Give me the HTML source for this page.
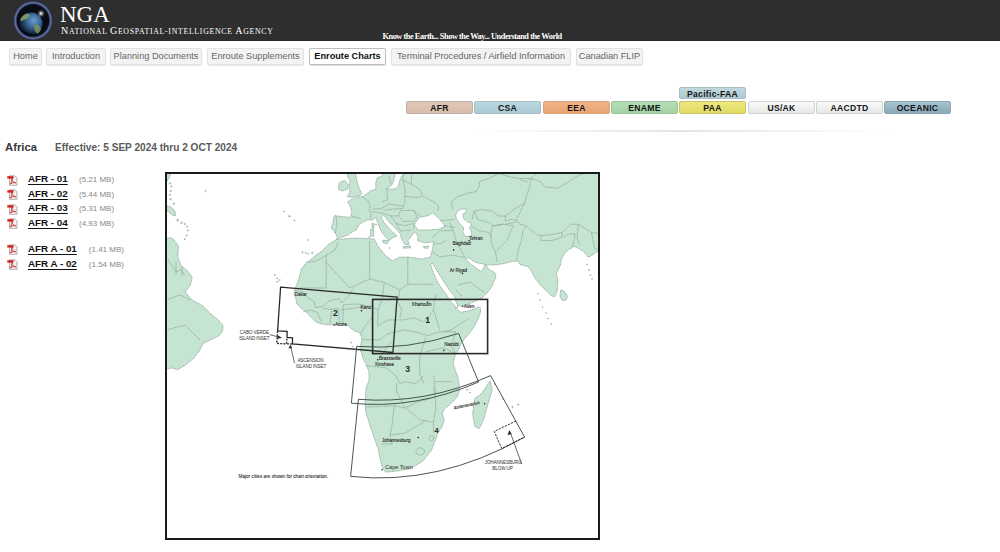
<!DOCTYPE html>
<html><head><meta charset="utf-8">
<style>
*{margin:0;padding:0;box-sizing:border-box}
html,body{width:1000px;height:552px;overflow:hidden;background:#fff;font-family:"Liberation Sans",sans-serif}
.abs{position:absolute}
#hdr{position:absolute;left:0;top:0;width:1000px;height:41px;background:#2e2e2e;border-bottom:1px solid #262626}
#logo{position:absolute;left:13px;top:1px;width:40px;height:40px;border-radius:50%;
 background:radial-gradient(circle at 50% 50%,#0a0e18 0,#0a0e18 60%,#3a4a78 66%,#6c7cb0 72%,#2a3458 80%,#1c2238 100%)}
.nga{position:absolute;left:60px;top:2.8px;font-family:"Liberation Serif",serif;color:#fff;font-size:23px;line-height:24px;letter-spacing:0px}
.agency{position:absolute;left:61px;top:24.7px;font-family:"Liberation Serif",serif;color:#fff;font-size:7.8px;line-height:12px;letter-spacing:0.7px;white-space:nowrap}.bc{font-size:10px}
.tag{position:absolute;left:382.5px;top:32px;font-family:"Liberation Serif",serif;color:#fff;font-size:8.3px;line-height:9px;font-weight:bold;letter-spacing:-0.45px}
.nav{position:absolute;top:48px;height:17px;background:#f3f3f3;border:1px solid #e2e2e2;border-radius:2px;box-shadow:0 1px 1px #e8e8e8;color:#666;font-size:9.2px;line-height:15px;text-align:center;white-space:nowrap}
.nav.on{background:#fff;border:1px solid #bdbdbd;color:#111;font-weight:bold;box-shadow:0 1px 1px #ddd}
.tab{position:absolute;top:101px;width:67px;height:13px;border:1px solid #b9b0aa;border-radius:2px;font-weight:bold;font-size:8.6px;line-height:12px;text-align:center;color:#151515;letter-spacing:0.3px}
.h{position:absolute;font-weight:bold;white-space:nowrap}
.row{position:absolute;left:7px;height:14px;white-space:nowrap}
.pdf{position:absolute;left:0;top:1.5px;width:11px;height:11px}
.fn{position:absolute;left:21px;top:0;font-weight:bold;font-size:9.8px;line-height:11px;color:#111;text-decoration:underline;text-decoration-thickness:1px;text-underline-offset:1.5px}
.sz{position:absolute;top:1px;font-size:8px;line-height:11px;color:#888}
</style></head><body>
<div id="hdr"></div>
<svg class="abs" style="left:8px;top:0" width="50" height="42" viewBox="0 0 50 42">
<defs>
<radialGradient id="lg1" cx="0.5" cy="0.5" r="0.5"><stop offset="0" stop-color="#05070c"/><stop offset="0.8" stop-color="#0a0d16"/><stop offset="0.85" stop-color="#34406a"/><stop offset="0.91" stop-color="#6a78a8"/><stop offset="0.96" stop-color="#3c4870"/><stop offset="1" stop-color="#2a3040"/></radialGradient>
<radialGradient id="earth" cx="0.62" cy="0.35" r="0.7"><stop offset="0" stop-color="#6f9cc8"/><stop offset="0.4" stop-color="#3a6c9c"/><stop offset="0.75" stop-color="#1a3050"/><stop offset="1" stop-color="#060a14"/></radialGradient>
<radialGradient id="sun" cx="0.5" cy="0.5" r="0.5"><stop offset="0" stop-color="#ffffff"/><stop offset="0.25" stop-color="#d0d0d8" stop-opacity="0.85"/><stop offset="1" stop-color="#222" stop-opacity="0"/></radialGradient>
<clipPath id="inner"><circle cx="25" cy="20.5" r="16.3"/></clipPath>
<clipPath id="gl"><circle cx="23" cy="24" r="11.5"/></clipPath>
</defs>
<rect x="0" y="0" width="50" height="40" fill="#2e2e2e"/>
<circle cx="25" cy="20.5" r="19.6" fill="url(#lg1)"/>
<g clip-path="url(#inner)">
<circle cx="23" cy="24" r="11.5" fill="url(#earth)"/>
<g clip-path="url(#gl)">
<path d="M11,15 C15,12.5 20,13 22,15.5 C21,18.5 17,19 14,21 L11,20 Z" fill="#8a9a60" opacity="0.9"/>
<path d="M26,25 C29,23 33,26 33,31 C31,35 28,34 26.5,30 Z" fill="#7e9058" opacity="0.85"/>
<path d="M8,22 C12,31 22,37 35,33 L35,42 L5,42 Z" fill="#04060c" opacity="0.8"/>
</g>
<circle cx="33" cy="13.5" r="4.5" fill="url(#sun)"/>
</g>
</svg>
<div class="nga">NGA</div>
<div class="agency"><span class="bc">N</span>ATIONAL <span class="bc">G</span>EOSPATIAL-INTELLIGENCE <span class="bc">A</span>GENCY</div>
<div class="tag">Know the Earth... Show the Way... Understand the World</div>

<div class="nav" style="left:9px;width:33px">Home</div>
<div class="nav" style="left:46px;width:60px">Introduction</div>
<div class="nav" style="left:110px;width:92px">Planning Documents</div>
<div class="nav" style="left:207px;width:97px">Enroute Supplements</div>
<div class="nav on" style="left:309px;width:77px">Enroute Charts</div>
<div class="nav" style="left:391px;width:180px">Terminal Procedures / Airfield Information</div>
<div class="nav" style="left:576px;width:67px">Canadian FLIP</div>

<div class="tab" style="left:679px;top:87px;height:12px;background:linear-gradient(#c2d8de,#adc9d2);border-color:#a9bcc2">Pacific-FAA</div>
<div class="tab" style="left:406px;background:linear-gradient(#e2c8ba,#d9bca9)">AFR</div>
<div class="tab" style="left:474px;background:linear-gradient(#bcd8e0,#a9cad6);border-color:#a8bcc4">CSA</div>
<div class="tab" style="left:543px;background:linear-gradient(#f0b488,#e8a474);border-color:#d9a07c">EEA</div>
<div class="tab" style="left:611px;background:linear-gradient(#b6deb6,#a2d2a2);border-color:#9cc09c">ENAME</div>
<div class="tab" style="left:679px;background:linear-gradient(#ece882,#e0dc62);border-color:#c8c468">PAA</div>
<div class="tab" style="left:748px;background:linear-gradient(#fafafa,#e6e6e6);border-color:#d0d0d0">US/AK</div>
<div class="tab" style="left:816px;background:linear-gradient(#fafafa,#e6e6e6);border-color:#d0d0d0">AACDTD</div>
<div class="tab" style="left:884px;background:linear-gradient(#a8c4d0,#86a8b8);border-color:#8aa4b0">OCEANIC</div>
<div class="abs" style="left:470px;top:130px;width:420px;height:2px;background:linear-gradient(90deg,rgba(230,230,230,0),#e4e4e4 50%,rgba(230,230,230,0))"></div>

<div class="h" style="left:5px;top:141px;font-size:11.3px;line-height:13px;color:#3a3a3a">Africa</div>
<div class="h" style="left:55px;top:142px;font-size:10.1px;line-height:12px;color:#5a5a5a">Effective: 5 SEP 2024 thru 2 OCT 2024</div>

<div class="row" style="top:173.0px"><svg class="pdf" viewBox="0 0 11 11"><path d="M2.5,0.8 L8,0.8 L10,2.8 L10,10.3 L2.5,10.3 Z" fill="#f4f0f0" stroke="#9a8e8e" stroke-width="0.7"/><path d="M0.3,1.2 L6.5,1.2 L6.5,3.6 L0.3,3.6 Z" fill="#d32020"/><path d="M3.5,9 C4.5,6.5 5.5,4 5.2,3 C4.8,2.5 4.4,3.5 5,5 C5.6,6.5 7,7.8 8.8,8 C8.5,7 6,7.2 3.5,9 Z" fill="none" stroke="#c81e1e" stroke-width="0.8"/></svg><span class="fn">AFR - 01</span><span class="sz" style="left:72px">(5.21 MB)</span></div>
<div class="row" style="top:187.8px"><svg class="pdf" viewBox="0 0 11 11"><path d="M2.5,0.8 L8,0.8 L10,2.8 L10,10.3 L2.5,10.3 Z" fill="#f4f0f0" stroke="#9a8e8e" stroke-width="0.7"/><path d="M0.3,1.2 L6.5,1.2 L6.5,3.6 L0.3,3.6 Z" fill="#d32020"/><path d="M3.5,9 C4.5,6.5 5.5,4 5.2,3 C4.8,2.5 4.4,3.5 5,5 C5.6,6.5 7,7.8 8.8,8 C8.5,7 6,7.2 3.5,9 Z" fill="none" stroke="#c81e1e" stroke-width="0.8"/></svg><span class="fn">AFR - 02</span><span class="sz" style="left:72px">(5.44 MB)</span></div>
<div class="row" style="top:202.3px"><svg class="pdf" viewBox="0 0 11 11"><path d="M2.5,0.8 L8,0.8 L10,2.8 L10,10.3 L2.5,10.3 Z" fill="#f4f0f0" stroke="#9a8e8e" stroke-width="0.7"/><path d="M0.3,1.2 L6.5,1.2 L6.5,3.6 L0.3,3.6 Z" fill="#d32020"/><path d="M3.5,9 C4.5,6.5 5.5,4 5.2,3 C4.8,2.5 4.4,3.5 5,5 C5.6,6.5 7,7.8 8.8,8 C8.5,7 6,7.2 3.5,9 Z" fill="none" stroke="#c81e1e" stroke-width="0.8"/></svg><span class="fn">AFR - 03</span><span class="sz" style="left:72px">(5.31 MB)</span></div>
<div class="row" style="top:216.8px"><svg class="pdf" viewBox="0 0 11 11"><path d="M2.5,0.8 L8,0.8 L10,2.8 L10,10.3 L2.5,10.3 Z" fill="#f4f0f0" stroke="#9a8e8e" stroke-width="0.7"/><path d="M0.3,1.2 L6.5,1.2 L6.5,3.6 L0.3,3.6 Z" fill="#d32020"/><path d="M3.5,9 C4.5,6.5 5.5,4 5.2,3 C4.8,2.5 4.4,3.5 5,5 C5.6,6.5 7,7.8 8.8,8 C8.5,7 6,7.2 3.5,9 Z" fill="none" stroke="#c81e1e" stroke-width="0.8"/></svg><span class="fn">AFR - 04</span><span class="sz" style="left:72px">(4.93 MB)</span></div>
<div class="row" style="top:242.7px"><svg class="pdf" viewBox="0 0 11 11"><path d="M2.5,0.8 L8,0.8 L10,2.8 L10,10.3 L2.5,10.3 Z" fill="#f4f0f0" stroke="#9a8e8e" stroke-width="0.7"/><path d="M0.3,1.2 L6.5,1.2 L6.5,3.6 L0.3,3.6 Z" fill="#d32020"/><path d="M3.5,9 C4.5,6.5 5.5,4 5.2,3 C4.8,2.5 4.4,3.5 5,5 C5.6,6.5 7,7.8 8.8,8 C8.5,7 6,7.2 3.5,9 Z" fill="none" stroke="#c81e1e" stroke-width="0.8"/></svg><span class="fn">AFR A - 01</span><span class="sz" style="left:81.8px">(1.41 MB)</span></div>
<div class="row" style="top:257.8px"><svg class="pdf" viewBox="0 0 11 11"><path d="M2.5,0.8 L8,0.8 L10,2.8 L10,10.3 L2.5,10.3 Z" fill="#f4f0f0" stroke="#9a8e8e" stroke-width="0.7"/><path d="M0.3,1.2 L6.5,1.2 L6.5,3.6 L0.3,3.6 Z" fill="#d32020"/><path d="M3.5,9 C4.5,6.5 5.5,4 5.2,3 C4.8,2.5 4.4,3.5 5,5 C5.6,6.5 7,7.8 8.8,8 C8.5,7 6,7.2 3.5,9 Z" fill="none" stroke="#c81e1e" stroke-width="0.8"/></svg><span class="fn">AFR A - 02</span><span class="sz" style="left:81.8px">(1.54 MB)</span></div>


<svg class="abs" style="left:0;top:0" width="1000" height="552" viewBox="0 0 1000 552">
<defs><clipPath id="mc"><rect x="166" y="173" width="433" height="366"/></clipPath></defs>
<g clip-path="url(#mc)">
<path d="M383.0,173.0 L600.0,173.0 L600.0,252.0 L597.0,251.7 L592.6,255.0 L588.3,257.2 L583.9,251.7 L578.5,248.5 L574.1,246.3 L568.7,249.6 L564.3,253.9 L561.5,259.0 L560.5,265.0 L556.2,273.6 L558.0,280.8 L557.1,291.7 L554.3,297.1 L550.7,295.3 L545.3,289.9 L539.9,284.4 L534.4,277.2 L530.8,269.9 L527.2,266.3 L519.9,264.5 L518.0,261.0 L510.9,261.7 L502.2,263.9 L493.5,265.0 L486.0,264.5 L488.4,269.0 L494.8,272.8 L496.0,277.0 L494.4,280.0 L492.0,286.4 L488.0,292.0 L482.4,297.6 L476.0,300.8 L468.0,304.0 L462.4,306.4 L457.6,305.6 L455.5,309.0 L461.2,312.2 L467.7,311.0 L474.2,309.0 L478.3,306.9 L480.3,307.7 L480.7,311.4 L479.1,316.3 L476.7,322.0 L473.4,327.7 L469.3,333.4 L464.4,339.1 L461.2,343.2 L459.1,348.8 L454.8,356.1 L453.3,363.3 L454.8,369.1 L457.7,376.4 L459.0,383.6 L459.5,390.9 L457.0,397.0 L450.9,403.5 L444.3,409.1 L442.2,413.5 L444.3,420.0 L442.2,426.5 L437.8,433.0 L435.7,439.6 L431.3,450.4 L422.6,461.3 L409.6,468.9 L396.5,471.1 L385.7,472.2 L382.4,467.8 L380.2,459.1 L378.0,448.3 L374.8,439.6 L370.4,426.5 L366.1,413.5 L365.0,402.6 L366.1,387.4 L369.0,380.7 L369.0,371.7 L365.4,362.6 L363.5,360.0 L361.7,353.5 L359.9,348.1 L360.8,344.5 L361.7,339.9 L361.3,335.4 L359.0,332.7 L354.5,330.9 L350.8,328.1 L347.2,325.0 L338.1,324.1 L329.1,325.0 L320.0,323.6 L315.7,321.8 L310.3,316.3 L304.9,310.9 L300.3,307.3 L296.7,303.7 L295.8,298.2 L294.0,294.6 L294.9,289.2 L298.5,280.1 L301.2,269.2 L306.7,262.0 L309.4,260.8 L315.7,255.3 L321.2,251.7 L328.4,244.5 L336.6,239.5 L337.5,238.0 L334.7,231.8 L331.1,228.2 L333.0,222.7 L333.8,217.3 L334.7,215.5 L341.0,216.5 L350.0,217.3 L352.0,211.9 L350.0,205.5 L347.4,201.9 L352.0,199.2 L361.0,196.5 L361.9,197.3 L366.3,194.0 L370.7,190.7 L376.0,189.4 L375.7,183.0 L377.3,177.5 L381.7,176.4 L383.0,173.0Z" fill="#c6e4d2" stroke="#7f978a" stroke-width="0.7" stroke-dasharray="1.3 0.5"/>
<path d="M166.0,238.0 L172.2,238.0 L178.6,246.0 L177.7,257.0 L181.3,266.0 L186.7,270.0 L192.2,277.0 L190.4,285.0 L185.0,292.0 L192.2,300.0 L203.0,306.0 L212.0,315.0 L218.4,320.0 L223.0,325.4 L222.6,330.9 L219.3,335.4 L212.1,339.0 L203.0,343.5 L199.4,350.8 L194.0,358.0 L185.0,365.3 L177.7,369.8 L172.2,368.0 L166.0,369.0Z" fill="#c6e4d2" stroke="#7f978a" stroke-width="0.7" stroke-dasharray="1.3 0.5"/>
<path d="M490.0,380.9 L492.2,389.6 L487.8,404.8 L483.5,420.0 L479.1,428.7 L474.8,426.5 L472.6,413.5 L474.8,398.3 L481.3,393.9 L485.7,387.4Z" fill="#c6e4d2" stroke="#7f978a" stroke-width="0.7" stroke-dasharray="1.3 0.5"/>
<path d="M560.5,290.0 L564.0,291.0 L567.5,296.0 L566.0,300.0 L562.0,300.5 L560.0,296.0Z" fill="#c6e4d2" stroke="#7f978a" stroke-width="0.7" stroke-dasharray="1.3 0.5"/>
<path d="M167.0,206.0 L171.0,207.0 L175.0,211.0 L175.5,216.0 L172.0,215.0 L168.5,212.0 L166.0,210.0Z" fill="#c6e4d2" stroke="#7f978a" stroke-width="0.7" stroke-dasharray="1.3 0.5"/>
<path d="M166.0,173.0 L171.0,173.0 L169.0,178.0 L166.0,183.0Z" fill="#c6e4d2" stroke="#7f978a" stroke-width="0.7" stroke-dasharray="1.3 0.5"/>
<path d="M336.6,239.5 L338.1,238.1 L347.2,235.4 L352.0,232.0 L356.2,230.0 L359.0,224.5 L363.5,221.8 L367.1,220.0 L372.5,220.0 L376.2,217.3 L377.5,222.0 L379.5,227.5 L382.0,232.5 L386.0,237.5 L389.5,240.5 L391.5,238.5 L394.5,237.0 L397.0,236.0 L393.2,232.5 L388.8,228.2 L384.5,223.1 L380.9,217.3 L383.8,215.1 L388.8,221.7 L393.2,226.0 L397.5,230.4 L400.4,234.0 L401.5,239.0 L405.1,244.5 L408.8,244.5 L408.0,240.0 L410.6,237.2 L414.2,231.8 L417.8,235.4 L417.8,240.8 L425.0,242.7 L434.1,241.7 L432.3,249.9 L430.5,257.1 L421.4,259.0 L408.8,257.1 L399.7,257.1 L392.5,260.8 L385.2,255.3 L378.0,246.3 L374.3,239.0 L356.2,238.1 L341.7,239.0Z" fill="#ffffff" stroke="#7f978a" stroke-width="0.7" stroke-dasharray="1.3 0.5"/>
<path d="M414.2,224.5 L419.6,217.3 L428.7,215.5 L432.3,212.8 L435.9,215.5 L441.4,220.9 L445.0,226.3 L439.6,229.1 L428.7,230.0 L417.8,230.0Z" fill="#ffffff" stroke="#7f978a" stroke-width="0.7" stroke-dasharray="1.3 0.5"/>
<path d="M457.2,211.4 L461.3,209.0 L466.2,209.0 L466.2,212.2 L462.9,213.9 L463.7,218.7 L467.8,222.0 L471.1,222.8 L471.1,225.3 L469.4,227.7 L471.1,231.0 L471.9,235.0 L469.4,236.7 L464.6,235.9 L462.9,231.8 L463.7,227.7 L459.7,223.6 L456.4,218.7 L455.6,215.5Z" fill="#ffffff" stroke="#7f978a" stroke-width="0.7" stroke-dasharray="1.3 0.5"/>
<path d="M430.5,264.0 L433.0,272.0 L436.5,280.0 L441.0,287.5 L446.0,294.0 L450.0,300.5 L455.0,306.0 L457.6,308.8 L457.6,305.6 L455.5,300.0 L454.4,296.0 L450.4,291.5 L445.6,284.5 L441.0,277.0 L436.5,270.0 L432.5,263.0Z" fill="#ffffff" stroke="#7f978a" stroke-width="0.7" stroke-dasharray="1.3 0.5"/>
<path d="M465.6,258.9 L468.2,257.6 L475.8,262.7 L483.4,264.0 L486.0,264.5 L484.6,265.2 L483.4,269.0 L480.8,271.5 L475.8,267.7 L470.7,264.0Z" fill="#ffffff" stroke="#7f978a" stroke-width="0.7" stroke-dasharray="1.3 0.5"/>
<path d="M387.2,188.5 L391.6,185.2 L393.8,180.8 L394.9,174.2 L395.0,173.0 L406.0,173.0 L402.0,176.0 L400.4,178.6 L398.2,186.3 L396.0,188.5 L391.0,189.5Z" fill="#ffffff" stroke="#7f978a" stroke-width="0.7" stroke-dasharray="1.3 0.5"/>
<path d="M347.4,173.0 L355.6,173.0 L356.5,180.0 L359.2,188.3 L362.0,193.7 L360.0,195.5 L352.0,197.4 L347.4,196.5 L350.0,192.0 L349.0,186.5 L350.0,181.0 L347.4,176.0Z" fill="#c6e4d2" stroke="#7f978a" stroke-width="0.7" stroke-dasharray="1.3 0.5"/>
<path d="M339.3,182.9 L344.7,180.2 L348.3,184.7 L347.4,189.2 L342.0,191.0 L338.4,189.2Z" fill="#c6e4d2" stroke="#7f978a" stroke-width="0.7" stroke-dasharray="1.3 0.5"/>
<path d="M382.5,240.5 L388.5,240.2 L387.5,243.5 L383.5,243.0Z" fill="#c6e4d2" stroke="#7f978a" stroke-width="0.7" stroke-dasharray="1.3 0.5"/>
<path d="M370.5,229.5 L373.5,229.0 L373.8,236.0 L370.5,236.5Z" fill="#c6e4d2" stroke="#7f978a" stroke-width="0.7" stroke-dasharray="1.3 0.5"/>
<path d="M372.0,223.5 L374.0,223.5 L373.8,228.0 L372.0,228.0Z" fill="#c6e4d2" stroke="#7f978a" stroke-width="0.7" stroke-dasharray="1.3 0.5"/>
<path d="M403.5,246.5 L410.7,246.0 L410.5,247.8 L403.5,248.3Z" fill="#c6e4d2" stroke="#7f978a" stroke-width="0.7" stroke-dasharray="1.3 0.5"/>
<path d="M423.4,246.5 L428.8,246.0 L427.5,248.3 L424.0,248.0Z" fill="#c6e4d2" stroke="#7f978a" stroke-width="0.7" stroke-dasharray="1.3 0.5"/>
<circle cx="170" cy="183.4" r="0.8" fill="#c6e4d2" stroke="#7d9488" stroke-width="0.5"/>
<circle cx="171.3" cy="186.5" r="0.7" fill="#c6e4d2" stroke="#7d9488" stroke-width="0.5"/>
<circle cx="170.7" cy="191" r="0.8" fill="#c6e4d2" stroke="#7d9488" stroke-width="0.5"/>
<circle cx="170" cy="194.8" r="0.7" fill="#c6e4d2" stroke="#7d9488" stroke-width="0.5"/>
<circle cx="170.7" cy="199.3" r="0.8" fill="#c6e4d2" stroke="#7d9488" stroke-width="0.5"/>
<circle cx="173.9" cy="203.7" r="0.8" fill="#c6e4d2" stroke="#7d9488" stroke-width="0.5"/>
<circle cx="177.7" cy="220.2" r="1" fill="#c6e4d2" stroke="#7d9488" stroke-width="0.5"/>
<circle cx="181.5" cy="222.8" r="0.9" fill="#c6e4d2" stroke="#7d9488" stroke-width="0.5"/>
<circle cx="184.7" cy="224" r="0.8" fill="#c6e4d2" stroke="#7d9488" stroke-width="0.5"/>
<circle cx="187.2" cy="226.6" r="0.7" fill="#c6e4d2" stroke="#7d9488" stroke-width="0.5"/>
<circle cx="187.8" cy="230.4" r="0.7" fill="#c6e4d2" stroke="#7d9488" stroke-width="0.5"/>
<circle cx="186.6" cy="235.5" r="0.7" fill="#c6e4d2" stroke="#7d9488" stroke-width="0.5"/>
<circle cx="184.7" cy="239.3" r="0.7" fill="#c6e4d2" stroke="#7d9488" stroke-width="0.5"/>
<circle cx="205.6" cy="191" r="0.6" fill="#c6e4d2" stroke="#7d9488" stroke-width="0.5"/>
<circle cx="283.8" cy="211.4" r="0.6" fill="#c6e4d2" stroke="#7d9488" stroke-width="0.5"/>
<circle cx="289.5" cy="216.3" r="0.9" fill="#c6e4d2" stroke="#7d9488" stroke-width="0.5"/>
<circle cx="294.4" cy="220.4" r="0.6" fill="#c6e4d2" stroke="#7d9488" stroke-width="0.5"/>
<circle cx="308.2" cy="240" r="0.6" fill="#c6e4d2" stroke="#7d9488" stroke-width="0.5"/>
<circle cx="302.5" cy="252.2" r="0.7" fill="#c6e4d2" stroke="#7d9488" stroke-width="0.5"/>
<circle cx="305.8" cy="253" r="0.6" fill="#c6e4d2" stroke="#7d9488" stroke-width="0.5"/>
<circle cx="308.2" cy="253.8" r="0.6" fill="#c6e4d2" stroke="#7d9488" stroke-width="0.5"/>
<circle cx="312.3" cy="253" r="0.8" fill="#c6e4d2" stroke="#7d9488" stroke-width="0.5"/>
<circle cx="274.8" cy="275" r="0.6" fill="#c6e4d2" stroke="#7d9488" stroke-width="0.5"/>
<circle cx="277.2" cy="278.3" r="0.6" fill="#c6e4d2" stroke="#7d9488" stroke-width="0.5"/>
<circle cx="279.7" cy="280" r="0.6" fill="#c6e4d2" stroke="#7d9488" stroke-width="0.5"/>
<circle cx="277.2" cy="281.6" r="0.6" fill="#c6e4d2" stroke="#7d9488" stroke-width="0.5"/>
<circle cx="351" cy="342.5" r="0.6" fill="#c6e4d2" stroke="#7d9488" stroke-width="0.5"/>
<circle cx="352.6" cy="346.5" r="0.5" fill="#c6e4d2" stroke="#7d9488" stroke-width="0.5"/>
<circle cx="538" cy="293.5" r="0.5" fill="#c6e4d2" stroke="#7d9488" stroke-width="0.5"/>
<circle cx="540" cy="300" r="0.5" fill="#c6e4d2" stroke="#7d9488" stroke-width="0.5"/>
<circle cx="542.5" cy="307" r="0.5" fill="#c6e4d2" stroke="#7d9488" stroke-width="0.5"/>
<circle cx="546" cy="313" r="0.5" fill="#c6e4d2" stroke="#7d9488" stroke-width="0.5"/>
<circle cx="548" cy="318.5" r="0.5" fill="#c6e4d2" stroke="#7d9488" stroke-width="0.5"/>
<circle cx="551" cy="324" r="0.5" fill="#c6e4d2" stroke="#7d9488" stroke-width="0.5"/>
<circle cx="587" cy="264.5" r="0.5" fill="#c6e4d2" stroke="#7d9488" stroke-width="0.5"/>
<circle cx="589" cy="270" r="0.6" fill="#c6e4d2" stroke="#7d9488" stroke-width="0.5"/>
<circle cx="590.5" cy="275" r="0.5" fill="#c6e4d2" stroke="#7d9488" stroke-width="0.5"/>
<circle cx="592" cy="279" r="0.5" fill="#c6e4d2" stroke="#7d9488" stroke-width="0.5"/>
<circle cx="467" cy="390" r="0.6" fill="#c6e4d2" stroke="#7d9488" stroke-width="0.5"/>
<circle cx="470" cy="392.5" r="0.5" fill="#c6e4d2" stroke="#7d9488" stroke-width="0.5"/>
<circle cx="512.5" cy="407" r="0.7" fill="#c6e4d2" stroke="#7d9488" stroke-width="0.5"/>
<circle cx="518" cy="404.5" r="0.7" fill="#c6e4d2" stroke="#7d9488" stroke-width="0.5"/>
<circle cx="503" cy="399" r="0.5" fill="#c6e4d2" stroke="#7d9488" stroke-width="0.5"/>
<circle cx="495" cy="384" r="0.5" fill="#c6e4d2" stroke="#7d9488" stroke-width="0.5"/>
<circle cx="376" cy="224.5" r="0.6" fill="#c6e4d2" stroke="#7d9488" stroke-width="0.5"/>
<circle cx="389.5" cy="248" r="0.5" fill="#c6e4d2" stroke="#7d9488" stroke-width="0.5"/>
<circle cx="369" cy="237" r="0.5" fill="#c6e4d2" stroke="#7d9488" stroke-width="0.5"/>
<path d="M338.0,242.7 L335.3,249.9 L326.2,255.4 L317.2,260.8 L308.0,262.6" fill="none" stroke="#82998c" stroke-width="0.65" stroke-dasharray="1.4 0.4"/>
<path d="M326.2,255.4 L326.2,288.0" fill="none" stroke="#82998c" stroke-width="0.65" stroke-dasharray="1.4 0.4"/>
<path d="M326.2,262.6 L349.8,288.0" fill="none" stroke="#82998c" stroke-width="0.65" stroke-dasharray="1.4 0.4"/>
<path d="M349.8,288.0 L369.7,278.9" fill="none" stroke="#82998c" stroke-width="0.65" stroke-dasharray="1.4 0.4"/>
<path d="M369.7,240.9 L369.7,278.9" fill="none" stroke="#82998c" stroke-width="0.65" stroke-dasharray="1.4 0.4"/>
<path d="M300.0,288.0 L326.2,288.0" fill="none" stroke="#82998c" stroke-width="0.65" stroke-dasharray="1.4 0.4"/>
<path d="M407.8,257.2 L407.8,284.3 L433.1,284.3" fill="none" stroke="#82998c" stroke-width="0.65" stroke-dasharray="1.4 0.4"/>
<path d="M369.7,278.9 L384.2,282.5 L399.8,290.0" fill="none" stroke="#82998c" stroke-width="0.65" stroke-dasharray="1.4 0.4"/>
<path d="M384.2,282.5 L382.4,298.8 L378.0,310.0" fill="none" stroke="#82998c" stroke-width="0.65" stroke-dasharray="1.4 0.4"/>
<path d="M407.8,284.3 L399.8,290.0 L397.8,302.0 L401.8,310.0 L399.8,317.9" fill="none" stroke="#82998c" stroke-width="0.65" stroke-dasharray="1.4 0.4"/>
<path d="M377.8,325.9 L387.8,319.9 L399.8,319.9 L403.7,319.9 L413.7,317.9 L423.7,321.9 L429.6,315.9 L433.6,309.9" fill="none" stroke="#82998c" stroke-width="0.65" stroke-dasharray="1.4 0.4"/>
<path d="M435.6,294.0 L433.6,310.0 L439.6,329.8" fill="none" stroke="#82998c" stroke-width="0.65" stroke-dasharray="1.4 0.4"/>
<path d="M443.6,331.8 L451.6,329.8 L469.5,317.9" fill="none" stroke="#82998c" stroke-width="0.65" stroke-dasharray="1.4 0.4"/>
<path d="M387.8,333.8 L403.7,329.8 L415.7,331.8 L427.6,335.8 L439.6,331.8 L455.5,331.8" fill="none" stroke="#82998c" stroke-width="0.65" stroke-dasharray="1.4 0.4"/>
<path d="M455.5,331.8 L451.6,345.8 L455.5,353.7" fill="none" stroke="#82998c" stroke-width="0.65" stroke-dasharray="1.4 0.4"/>
<path d="M425.7,337.8 L421.7,349.8 L419.7,355.7 L419.7,373.7 L423.7,383.6" fill="none" stroke="#82998c" stroke-width="0.65" stroke-dasharray="1.4 0.4"/>
<path d="M425.7,351.8 L443.6,347.8 L455.5,353.7" fill="none" stroke="#82998c" stroke-width="0.65" stroke-dasharray="1.4 0.4"/>
<path d="M379.8,357.7 L387.8,345.8 L393.8,339.8" fill="none" stroke="#82998c" stroke-width="0.65" stroke-dasharray="1.4 0.4"/>
<path d="M361.9,339.8 L379.8,339.8 L387.8,333.8" fill="none" stroke="#82998c" stroke-width="0.65" stroke-dasharray="1.4 0.4"/>
<path d="M371.9,317.9 L363.9,327.8 L359.9,335.8" fill="none" stroke="#82998c" stroke-width="0.65" stroke-dasharray="1.4 0.4"/>
<path d="M340.0,310.0 L355.9,307.9 L369.9,305.9 L378.0,310.0 L377.8,325.9" fill="none" stroke="#82998c" stroke-width="0.65" stroke-dasharray="1.4 0.4"/>
<path d="M365.9,365.7 L385.8,367.7 L395.8,375.7 L399.8,383.6 L405.7,381.6 L415.7,383.6 L423.7,375.7" fill="none" stroke="#82998c" stroke-width="0.65" stroke-dasharray="1.4 0.4"/>
<path d="M435.6,381.6 L451.6,381.6" fill="none" stroke="#82998c" stroke-width="0.65" stroke-dasharray="1.4 0.4"/>
<path d="M433.6,375.7 L435.6,393.6" fill="none" stroke="#82998c" stroke-width="0.65" stroke-dasharray="1.4 0.4"/>
<path d="M366.1,407.0 L394.3,405.9 L405.2,408.0" fill="none" stroke="#82998c" stroke-width="0.65" stroke-dasharray="1.4 0.4"/>
<path d="M394.3,405.9 L392.2,424.3 L390.0,435.2 L392.2,443.9 L381.3,443.9" fill="none" stroke="#82998c" stroke-width="0.65" stroke-dasharray="1.4 0.4"/>
<path d="M390.0,435.2 L405.2,433.0 L416.1,426.5 L427.0,420.0" fill="none" stroke="#82998c" stroke-width="0.65" stroke-dasharray="1.4 0.4"/>
<path d="M405.2,408.0 L420.4,420.0 L433.5,422.2 L435.7,409.1" fill="none" stroke="#82998c" stroke-width="0.65" stroke-dasharray="1.4 0.4"/>
<path d="M405.2,408.0 L416.1,402.6 L431.3,398.3" fill="none" stroke="#82998c" stroke-width="0.65" stroke-dasharray="1.4 0.4"/>
<path d="M433.5,387.4 L435.7,400.4 L435.7,409.1" fill="none" stroke="#82998c" stroke-width="0.65" stroke-dasharray="1.4 0.4"/>
<path d="M396.5,383.0 L396.5,391.7 L405.2,408.0" fill="none" stroke="#82998c" stroke-width="0.65" stroke-dasharray="1.4 0.4"/>
<path d="M433.5,422.2 L433.5,433.0" fill="none" stroke="#82998c" stroke-width="0.65" stroke-dasharray="1.4 0.4"/>
<path d="M294.0,290.4 L303.0,292.2 L307.5,297.6 L313.8,301.2 L315.6,307.5" fill="none" stroke="#82998c" stroke-width="0.65" stroke-dasharray="1.4 0.4"/>
<path d="M303.0,312.0 L310.2,310.2 L317.4,312.0 L321.0,321.0" fill="none" stroke="#82998c" stroke-width="0.65" stroke-dasharray="1.4 0.4"/>
<path d="M315.6,307.5 L322.8,306.6 L328.2,301.2 L339.0,298.5 L341.7,303.0" fill="none" stroke="#82998c" stroke-width="0.65" stroke-dasharray="1.4 0.4"/>
<path d="M322.8,308.4 L330.0,309.3 L339.0,308.4" fill="none" stroke="#82998c" stroke-width="0.65" stroke-dasharray="1.4 0.4"/>
<path d="M338.1,308.4 L339.9,323.7" fill="none" stroke="#82998c" stroke-width="0.65" stroke-dasharray="1.4 0.4"/>
<path d="M331.8,309.3 L330.0,323.7" fill="none" stroke="#82998c" stroke-width="0.65" stroke-dasharray="1.4 0.4"/>
<path d="M341.7,303.0 L348.0,296.7 L353.4,288.6" fill="none" stroke="#82998c" stroke-width="0.65" stroke-dasharray="1.4 0.4"/>
<path d="M343.5,304.8 L357.0,303.9 L366.0,305.7" fill="none" stroke="#82998c" stroke-width="0.65" stroke-dasharray="1.4 0.4"/>
<path d="M343.5,304.8 L342.6,324.6" fill="none" stroke="#82998c" stroke-width="0.65" stroke-dasharray="1.4 0.4"/>
<path d="M361.5,196.3 L368.0,200.7 L370.2,206.1 L369.1,210.4 L371.3,214.8 L370.2,219.1" fill="none" stroke="#82998c" stroke-width="0.65" stroke-dasharray="1.4 0.4"/>
<path d="M386.5,188.7 L387.6,199.6 L382.2,201.7" fill="none" stroke="#82998c" stroke-width="0.65" stroke-dasharray="1.4 0.4"/>
<path d="M372.4,209.3 L382.2,208.3 L388.7,203.9" fill="none" stroke="#82998c" stroke-width="0.65" stroke-dasharray="1.4 0.4"/>
<path d="M405.0,188.7 L405.0,201.7 L402.8,208.3" fill="none" stroke="#82998c" stroke-width="0.65" stroke-dasharray="1.4 0.4"/>
<path d="M411.5,184.3 L420.2,189.8 L422.4,195.2" fill="none" stroke="#82998c" stroke-width="0.65" stroke-dasharray="1.4 0.4"/>
<path d="M405.0,196.3 L415.9,197.4 L423.5,196.3 L433.3,201.7 L438.7,206.1 L437.6,211.5" fill="none" stroke="#82998c" stroke-width="0.65" stroke-dasharray="1.4 0.4"/>
<path d="M402.8,173.0 L402.8,180.0 L405.0,188.7" fill="none" stroke="#82998c" stroke-width="0.65" stroke-dasharray="1.4 0.4"/>
<path d="M402.8,180.0 L411.5,184.3" fill="none" stroke="#82998c" stroke-width="0.65" stroke-dasharray="1.4 0.4"/>
<path d="M411.5,173.0 L411.5,184.3" fill="none" stroke="#82998c" stroke-width="0.65" stroke-dasharray="1.4 0.4"/>
<path d="M388.7,203.9 L402.8,206.1" fill="none" stroke="#82998c" stroke-width="0.65" stroke-dasharray="1.4 0.4"/>
<path d="M402.8,208.3 L390.9,209.3 L383.3,210.4" fill="none" stroke="#82998c" stroke-width="0.65" stroke-dasharray="1.4 0.4"/>
<path d="M400.7,210.4 L413.7,210.4 L417.0,217.0 L413.7,221.3 L402.8,221.3 L398.5,215.9 L400.7,210.4" fill="none" stroke="#82998c" stroke-width="0.65" stroke-dasharray="1.4 0.4"/>
<path d="M371.3,211.5 L384.3,213.7 L390.9,215.9 L398.5,215.9" fill="none" stroke="#82998c" stroke-width="0.65" stroke-dasharray="1.4 0.4"/>
<path d="M390.9,215.9 L396.3,223.5 L400.7,231.1" fill="none" stroke="#82998c" stroke-width="0.65" stroke-dasharray="1.4 0.4"/>
<path d="M396.3,223.5 L403.9,225.7 L413.7,223.5" fill="none" stroke="#82998c" stroke-width="0.65" stroke-dasharray="1.4 0.4"/>
<path d="M400.7,231.1 L411.5,230.0" fill="none" stroke="#82998c" stroke-width="0.65" stroke-dasharray="1.4 0.4"/>
<path d="M413.7,223.5 L413.7,228.9" fill="none" stroke="#82998c" stroke-width="0.65" stroke-dasharray="1.4 0.4"/>
<path d="M413.7,210.4 L420.2,215.9" fill="none" stroke="#82998c" stroke-width="0.65" stroke-dasharray="1.4 0.4"/>
<path d="M352.0,216.5 L361.0,218.5" fill="none" stroke="#82998c" stroke-width="0.65" stroke-dasharray="1.4 0.4"/>
<path d="M336.0,216.0 L337.0,225.0 L335.0,233.0" fill="none" stroke="#82998c" stroke-width="0.65" stroke-dasharray="1.4 0.4"/>
<path d="M389.0,176.0 L391.0,184.0" fill="none" stroke="#82998c" stroke-width="0.65" stroke-dasharray="1.4 0.4"/>
<path d="M453.0,209.5 L451.4,201.4 L457.9,196.5 L467.7,193.2 L475.9,191.6 L479.2,186.7 L479.2,181.8 L488.9,178.5 L498.7,173.6 L510.1,176.9 L518.3,178.5 L526.5,181.8 L530.0,178.5" fill="none" stroke="#82998c" stroke-width="0.65" stroke-dasharray="1.4 0.4"/>
<path d="M472.0,219.3 L474.3,211.2 L482.4,209.5 L492.2,211.2 L498.7,216.0 L505.3,216.0 L511.8,211.2" fill="none" stroke="#82998c" stroke-width="0.65" stroke-dasharray="1.4 0.4"/>
<path d="M505.3,216.0 L505.3,220.9 L511.8,219.3 L516.7,220.9" fill="none" stroke="#82998c" stroke-width="0.65" stroke-dasharray="1.4 0.4"/>
<path d="M505.3,224.2 L516.7,222.0" fill="none" stroke="#82998c" stroke-width="0.65" stroke-dasharray="1.4 0.4"/>
<path d="M474.3,211.2 L477.5,219.3 L488.9,222.6 L493.8,225.8 L503.6,224.2" fill="none" stroke="#82998c" stroke-width="0.65" stroke-dasharray="1.4 0.4"/>
<path d="M471.0,225.8 L479.2,230.7 L488.9,232.4 L492.2,237.3" fill="none" stroke="#82998c" stroke-width="0.65" stroke-dasharray="1.4 0.4"/>
<path d="M492.2,225.8 L490.6,237.3 L492.2,245.4 L495.5,251.9 L497.1,262.0" fill="none" stroke="#82998c" stroke-width="0.65" stroke-dasharray="1.4 0.4"/>
<path d="M493.8,225.8 L503.6,224.2 L513.4,225.8 L510.1,232.4 L506.9,240.5 L500.4,247.0 L495.5,251.9" fill="none" stroke="#82998c" stroke-width="0.65" stroke-dasharray="1.4 0.4"/>
<path d="M449.8,222.6 L453.0,230.7 L456.3,240.5 L461.2,250.3 L464.5,256.8" fill="none" stroke="#82998c" stroke-width="0.65" stroke-dasharray="1.4 0.4"/>
<path d="M432.0,237.5 L440.0,230.7 L453.0,230.7" fill="none" stroke="#82998c" stroke-width="0.65" stroke-dasharray="1.4 0.4"/>
<path d="M432.5,244.0 L440.0,243.8 L446.5,240.5" fill="none" stroke="#82998c" stroke-width="0.65" stroke-dasharray="1.4 0.4"/>
<path d="M432.5,252.0 L440.0,256.8 L453.0,255.2 L464.5,257.5" fill="none" stroke="#82998c" stroke-width="0.65" stroke-dasharray="1.4 0.4"/>
<path d="M440.0,221.0 L454.7,219.3" fill="none" stroke="#82998c" stroke-width="0.65" stroke-dasharray="1.4 0.4"/>
<path d="M444.9,225.8 L454.7,227.5" fill="none" stroke="#82998c" stroke-width="0.65" stroke-dasharray="1.4 0.4"/>
<path d="M458.0,285.0 L470.0,282.0 L485.0,293.0" fill="none" stroke="#82998c" stroke-width="0.65" stroke-dasharray="1.4 0.4"/>
<path d="M456.0,290.0 L462.0,296.0" fill="none" stroke="#82998c" stroke-width="0.65" stroke-dasharray="1.4 0.4"/>
<path d="M531.2,178.5 L541.0,181.8 L544.3,186.7 L557.3,188.3 L568.7,181.8 L578.5,175.3 L583.4,173.6" fill="none" stroke="#82998c" stroke-width="0.65" stroke-dasharray="1.4 0.4"/>
<path d="M519.8,178.5 L531.2,178.5 L536.1,173.6" fill="none" stroke="#82998c" stroke-width="0.65" stroke-dasharray="1.4 0.4"/>
<path d="M531.2,178.5 L529.6,186.7 L526.3,196.5 L524.7,203.0 L516.5,207.9 L511.8,211.2" fill="none" stroke="#82998c" stroke-width="0.65" stroke-dasharray="1.4 0.4"/>
<path d="M524.7,203.0 L519.8,212.8 L516.5,219.3 L519.8,224.2 L526.3,225.8" fill="none" stroke="#82998c" stroke-width="0.65" stroke-dasharray="1.4 0.4"/>
<path d="M526.3,225.8 L531.2,230.7 L536.1,234.0 L541.0,235.6 L550.8,234.8 L562.2,232.4 L570.4,224.2 L578.5,224.2 L583.4,227.5 L591.6,232.4 L600.0,234.0" fill="none" stroke="#82998c" stroke-width="0.65" stroke-dasharray="1.4 0.4"/>
<path d="M541.0,235.6 L541.0,240.5 L552.4,240.5 L562.2,237.3 L562.2,232.4" fill="none" stroke="#82998c" stroke-width="0.65" stroke-dasharray="1.4 0.4"/>
<path d="M563.8,237.3 L568.7,234.0 L575.3,234.0 L573.6,242.1 L572.0,247.0" fill="none" stroke="#82998c" stroke-width="0.65" stroke-dasharray="1.4 0.4"/>
<path d="M578.5,224.2 L576.9,237.3 L580.1,245.4" fill="none" stroke="#82998c" stroke-width="0.65" stroke-dasharray="1.4 0.4"/>
<path d="M591.6,232.4 L593.2,242.1 L594.8,248.7 L600.0,250.3" fill="none" stroke="#82998c" stroke-width="0.65" stroke-dasharray="1.4 0.4"/>
<path d="M526.3,225.8 L523.0,230.7 L521.4,240.5 L518.2,250.3 L516.5,260.1" fill="none" stroke="#82998c" stroke-width="0.65" stroke-dasharray="1.4 0.4"/>
<path d="M167.7,259.0 L172.2,266.2 L175.9,271.7 L181.3,269.9 L184.9,275.3" fill="none" stroke="#82998c" stroke-width="0.65" stroke-dasharray="1.4 0.4"/>
<path d="M176.0,262.0 L176.0,275.0" fill="none" stroke="#82998c" stroke-width="0.65" stroke-dasharray="1.4 0.4"/>
<path d="M182.0,266.0 L182.0,276.0" fill="none" stroke="#82998c" stroke-width="0.65" stroke-dasharray="1.4 0.4"/>
<path d="M166.0,300.0 L180.0,295.0 L190.0,300.0" fill="none" stroke="#82998c" stroke-width="0.65" stroke-dasharray="1.4 0.4"/>
<path d="M166.0,330.0 L185.0,325.0 L200.0,340.0" fill="none" stroke="#82998c" stroke-width="0.65" stroke-dasharray="1.4 0.4"/>
</g>
<path d="M280.6,287.1 L397.1,297 L392.9,352.5 L292.5,344 L292.5,337.9 L287.1,337.4 L287.1,331.4 L277.6,330.9 Z" fill="none" stroke="#2a2a2a" stroke-width="1.3"/>
<path d="M277.6,331 L276.7,343.4 L286.5,343.9 L287.1,337.6 M287.1,343.9 L292.5,344" fill="none" stroke="#2a2a2a" stroke-width="1.3" stroke-dasharray="2 1.2"/>
<rect x="372.6" y="299.4" width="115" height="54.2" fill="none" stroke="#2a2a2a" stroke-width="1.6"/>
<path d="M356.7,346.4 Q407.7,350.5 458.6,333.4 L478.6,382 Q415,409.7 351.4,403.2 Z" fill="none" stroke="#34443a" stroke-width="0.9"/>
<path d="M358.4,399.3 Q424.5,404.9 490.6,375.6 L524.6,437.1 Q437.6,486 350.6,476.4 Z" fill="none" stroke="#34443a" stroke-width="0.9"/>
<path d="M516,421 L494.2,431.4 L501.8,448.5 L524.6,437.1" fill="none" stroke="#2a2a2a" stroke-width="1" stroke-dasharray="2.2 1.2"/>
<path d="M521.7,464 L510.5,433" stroke="#2a2a2a" stroke-width="0.7" fill="none"/><path d="M509.4,430 L507.6,435 L511.6,434 Z" fill="#2a2a2a"/>
<path d="M269.7,334.7 L279.5,337.2" stroke="#2a2a2a" stroke-width="0.7"/><path d="M282,337.8 L277.5,335.3 L277,339 Z" fill="#2a2a2a"/>
<path d="M294.5,363.2 L290.8,347" stroke="#2a2a2a" stroke-width="0.7"/><path d="M290.4,344.5 L288.5,348.5 L292.2,348 Z" fill="#2a2a2a"/>
<ellipse cx="420.2" cy="451.4" rx="4.2" ry="3.6" fill="none" stroke="#7f978a" stroke-width="0.7" stroke-dasharray="1.3 0.5"/>
<circle cx="431.5" cy="438" r="2.4" fill="none" stroke="#7f978a" stroke-width="0.7" stroke-dasharray="1.3 0.5"/>
<g font-family="Liberation Sans"><text x="333" y="315.8" font-size="8.6" font-weight="bold" fill="#222" >2</text>
<text x="425.2" y="323" font-size="8.6" font-weight="bold" fill="#222" >1</text>
<text x="405.2" y="372" font-size="8.6" font-weight="bold" fill="#2a2a2a" >3</text>
<text x="434.4" y="433.4" font-size="7.5" font-weight="bold" fill="#222" >4</text>
<text x="294.8" y="296" font-size="4.5" font-weight="normal" fill="#2a2a2a" stroke="#2a2a2a" stroke-width="0.12">Dakar</text>
<text x="360.5" y="309" font-size="4.5" font-weight="normal" fill="#2a2a2a" stroke="#2a2a2a" stroke-width="0.12">Kano</text>
<text x="335.2" y="325.6" font-size="4.5" font-weight="normal" fill="#2a2a2a" stroke="#2a2a2a" stroke-width="0.12">Accra</text>
<text x="412" y="305.8" font-size="4.5" font-weight="normal" fill="#2a2a2a" stroke="#2a2a2a" stroke-width="0.12">Khartoum</text>
<text x="444.6" y="346.2" font-size="4.5" font-weight="normal" fill="#2a2a2a" stroke="#2a2a2a" stroke-width="0.12">Nairobi</text>
<text x="379" y="359.8" font-size="4.5" font-weight="normal" fill="#2a2a2a" stroke="#2a2a2a" stroke-width="0.12">Brazzaville</text>
<text x="375.3" y="365.8" font-size="4.5" font-weight="normal" fill="#2a2a2a" stroke="#2a2a2a" stroke-width="0.12">Kinshasa</text>
<text x="464" y="307.6" font-size="4.5" font-weight="normal" fill="#2a2a2a" stroke="#2a2a2a" stroke-width="0.12">Aden</text>
<text x="382" y="442.4" font-size="4.5" font-weight="normal" fill="#2a2a2a" stroke="#2a2a2a" stroke-width="0.12">Johannesburg</text>
<text x="452.7" y="245.4" font-size="4.5" font-weight="normal" fill="#2a2a2a" stroke="#2a2a2a" stroke-width="0.12">Baghdad</text>
<text x="469" y="240" font-size="4.5" font-weight="normal" fill="#2a2a2a" stroke="#2a2a2a" stroke-width="0.12">Tehran</text>
<text x="449.8" y="271.5" font-size="4.5" font-weight="normal" fill="#2a2a2a" stroke="#2a2a2a" stroke-width="0.12">Ar Riyad</text>
<text x="385" y="468.6" font-size="5.6" font-weight="normal" fill="#333" >Cape Town</text>
<text x="454" y="409.5" font-size="4.5" fill="#2a2a2a" stroke="#2a2a2a" stroke-width="0.12" transform="rotate(-12 454 409.5)">Antananarivo</text>
<circle cx="361.5" cy="310.7" r="0.8" fill="#222"/>
<circle cx="334" cy="325" r="0.8" fill="#222"/>
<circle cx="427.5" cy="302.2" r="0.8" fill="#222"/>
<circle cx="443.8" cy="350.4" r="0.8" fill="#222"/>
<circle cx="377.7" cy="359.8" r="0.8" fill="#222"/>
<circle cx="462.6" cy="306.3" r="0.8" fill="#222"/>
<circle cx="418.2" cy="437.5" r="0.8" fill="#222"/>
<circle cx="382.2" cy="469.8" r="0.8" fill="#222"/>
<circle cx="484.6" cy="403.7" r="0.8" fill="#222"/>
<circle cx="462.5" cy="273.4" r="0.8" fill="#222"/>
<circle cx="453.6" cy="249.9" r="0.8" fill="#222"/>
<circle cx="469" cy="240.8" r="0.8" fill="#222"/>
<text x="239.8" y="334.2" font-size="4.6" font-weight="normal" fill="#333" letter-spacing="-0.1">CABO VERDE</text>
<text x="239.2" y="340.2" font-size="4.6" font-weight="normal" fill="#333" letter-spacing="-0.1">ISLAND INSET</text>
<text x="297.4" y="361.8" font-size="4.6" font-weight="normal" fill="#333" letter-spacing="-0.1">ASCENSION</text>
<text x="295.9" y="367.6" font-size="4.6" font-weight="normal" fill="#333" letter-spacing="-0.1">ISLAND INSET</text>
<text x="484.7" y="464.2" font-size="4.6" font-weight="normal" fill="#333" letter-spacing="-0.1">JOHANNESBURG</text>
<text x="492.3" y="469.5" font-size="4.6" font-weight="normal" fill="#333" letter-spacing="-0.1">BLOW UP</text>
<text x="238.6" y="477.6" font-size="4.6" font-weight="normal" fill="#333" stroke="#333" stroke-width="0.1" letter-spacing="0.04">Major cities are shown for chart orientation.</text></g>
<rect x="166" y="173" width="433" height="366" fill="none" stroke="#1a1a1a" stroke-width="2"/>
</svg>
</body></html>
